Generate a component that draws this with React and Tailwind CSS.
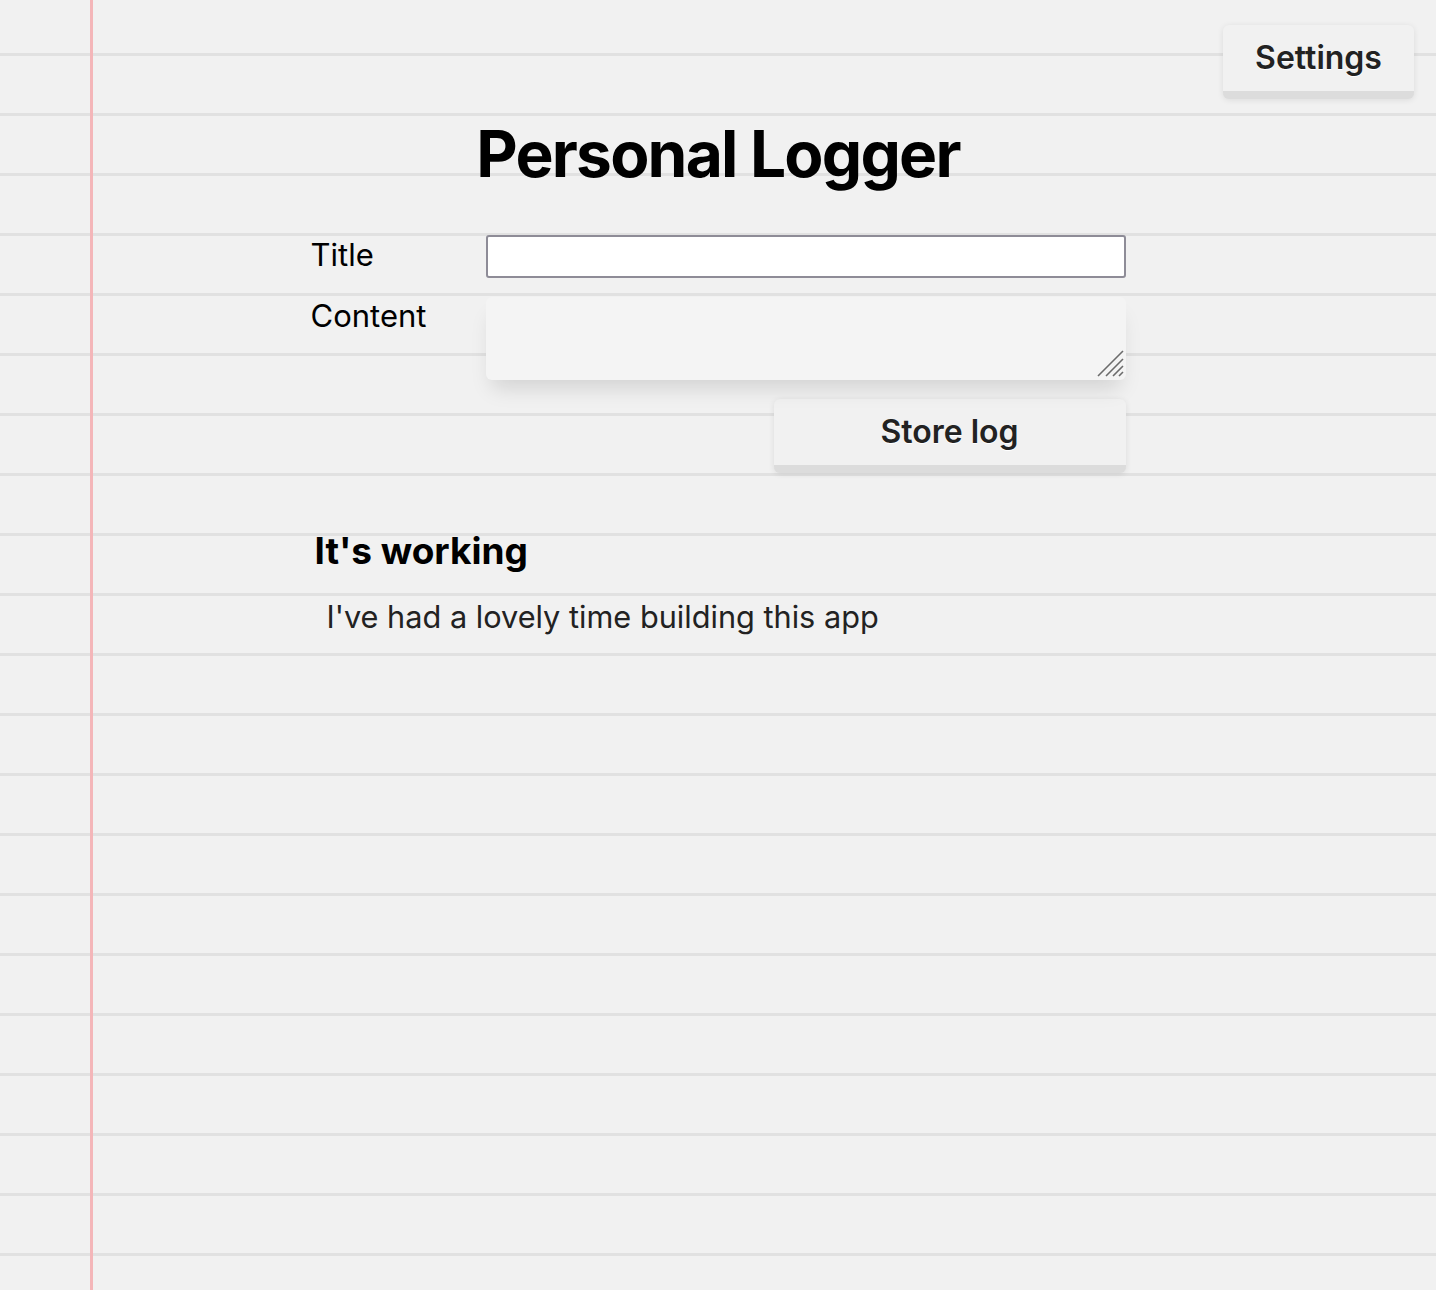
import { useState } from 'react';

const font = "font-['Inter','Noto_Sans',sans-serif]";

const Key = ({ children, className = '' }) => (
    <button
        type="button"
        className={`h-[74px] rounded-md border-b-[8px] border-[#dcdcdc] bg-[#f1f1f1] shadow-[0_1px_6px_rgba(0,0,0,0.09)] text-[32px] font-semibold leading-none text-[#222] [text-shadow:0_1px_0_#fff] ${className}`}
    >
        {children}
    </button>
);

const App = () => {
    const [title, setTitle] = useState('');
    const [content, setContent] = useState('');

    return (
        <div
            className={`${font} min-h-[1290px] w-full bg-[#f1f1f1] bg-[linear-gradient(to_right,transparent_90px,#f4b6b9_90px,#f4b6b9_93px,transparent_93px),linear-gradient(to_bottom,transparent_53px,#e1e1e1_53px,#e1e1e1_56px,transparent_56px)] bg-size-[100%_100%,100%_60px] text-black`}
        >
            <div className="flex justify-end pt-[25px] pr-[22px]">
                <Key className="w-[191px]">Settings</Key>
            </div>

            <h1 className="mt-[23px] text-center text-[64px] font-bold leading-none tracking-[-0.028em]">
                Personal Logger
            </h1>

            <form
                className="mx-auto mt-[49px] w-[815px]"
                onSubmit={(e) => e.preventDefault()}
            >
                <div className="grid grid-cols-[175px_1fr] gap-y-[19px]">
                    <label className="pt-[4px] text-[31px] leading-none">Title</label>
                    <input
                        type="text"
                        value={title}
                        onChange={(e) => setTitle(e.target.value)}
                        className="h-[43px] rounded-[3px] border-2 border-[#8e8c97] bg-white px-2 text-[24px] outline-none"
                    />
                    <label className="pt-[3px] text-[31px] leading-none">Content</label>
                    <div className="relative">
                        <textarea
                            value={content}
                            onChange={(e) => setContent(e.target.value)}
                            className="block h-[83px] w-full resize-none rounded-md bg-[#f4f4f4] px-2 text-[24px] shadow-[0_14px_20px_-6px_rgba(0,0,0,0.13)] outline-none"
                        />
                        <svg
                            className="pointer-events-none absolute bottom-[3px] right-[2px]"
                            width="28"
                            height="28"
                            viewBox="0 0 28 28"
                            fill="none"
                            stroke="#6b6b6b"
                            strokeWidth="1.6"
                        >
                            <path d="M2 27 L27 2 M10 27 L27 10 M17 27 L27 17 M23 27 L27 23" />
                        </svg>
                    </div>
                </div>
                <div className="mt-[19px] flex justify-end">
                    <Key className="w-[352px]">Store log</Key>
                </div>
            </form>

            <section className="mx-auto mt-[59px] w-[815px]">
                <h2 className="pl-[4px] text-[37px] font-bold leading-none">It's working</h2>
                <p className="mt-[33px] pl-[16px] text-[30.7px] leading-none text-[#222]">
                    I've had a lovely time building this app
                </p>
            </section>
        </div>
    );
};

export default App;
